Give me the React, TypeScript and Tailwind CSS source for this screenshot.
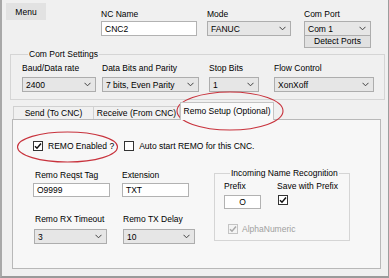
import React from "react";

const Chevron = () => (
  <svg width="7" height="5" viewBox="0 0 7 5" className="mr-[4px] shrink-0">
    <path d="M0.5 0.8 L3.5 3.8 L6.5 0.8" fill="none" stroke="#404040" strokeWidth="1" />
  </svg>
);

function Combo({ value, w }: { value: string; w: string }) {
  return (
    <div className={`${w} h-[15px] flex items-center justify-between bg-[#e6e6e6] border border-[#adadad] pl-[3px]`}>
      <span className="leading-[12px]">{value}</span>
      <Chevron />
    </div>
  );
}

function TextBox({ value, w, center }: { value: string; w: string; center?: boolean }) {
  return (
    <div className={`${w} h-[14px] flex items-center bg-white border border-[#b2b2b2] ${center ? "justify-center" : "pl-[3px]"}`}>
      <span className="leading-[12px]">{value}</span>
    </div>
  );
}

function Check({ disabled }: { disabled?: boolean }) {
  return (
    <div
      className={`w-[10px] h-[10px] flex items-center justify-center shrink-0 border ${
        disabled ? "border-[#c4c4c4] bg-[#f4f4f4]" : "border-[#333333] bg-white"
      }`}
    >
      <svg width="8" height="8" viewBox="0 0 8 8">
        <path
          d="M1 4.2 L3 6.2 L7 1.6"
          fill="none"
          stroke={disabled ? "#a8a8a8" : "#111111"}
          strokeWidth="1.5"
        />
      </svg>
    </div>
  );
}

function EmptyCheck() {
  return <div className="w-[10px] h-[10px] shrink-0 border border-[#333333] bg-white" />;
}

export default function App() {
  return (
    <div className="relative w-[389px] h-[278px] bg-[#f0f0f0] border-l-2 border-l-[#a8a8a8] border-r border-r-[#9c9c9c] border-b-2 border-b-[#9a9a9a] text-[8.5px] text-black font-['Liberation_Sans',Arial,sans-serif] overflow-hidden">
      {/* Top row */}
      <div className="flex items-start pt-[3px]">
        <div className="ml-[4px] w-[40px] h-[17px] bg-[#e2e2e2] flex items-center justify-center">
          <span className="leading-[12px]">Menu</span>
        </div>
        <div className="ml-[55px] flex flex-col pt-[5px]">
          <span className="leading-[12px]">NC Name</span>
          <div className="mt-[1px]">
            <div className="w-[96px] h-[15px] flex items-center bg-white border border-[#b2b2b2] pl-[3px]">
              <span className="leading-[12px]">CNC2</span>
            </div>
          </div>
        </div>
        <div className="ml-[10px] flex flex-col pt-[5px]">
          <span className="leading-[12px]">Mode</span>
          <div className="mt-[1px]">
            <Combo value="FANUC" w="w-[84px]" />
          </div>
        </div>
        <div className="ml-[13px] flex flex-col pt-[5px]">
          <span className="leading-[12px]">Com Port</span>
          <div className="mt-[1px]">
            <Combo value="Com 1" w="w-[67px]" />
          </div>
          <div className="w-[67px] h-[12px] bg-[#e1e1e1] border border-[#adadad] border-t-0 flex items-center justify-center">
            <span className="leading-[11px]">Detect Ports</span>
          </div>
        </div>
      </div>

      {/* Com Port Settings */}
      <fieldset className="ml-[8px] mt-[1px] w-[375px] border border-[#d5d5d5] pl-[11px] pb-[7px] m-0 p-0">
        <legend className="ml-[6px] px-[1px] leading-[11px]">Com Port Settings</legend>
        <div className="flex items-start">
          <div className="flex flex-col">
            <span className="leading-[12px] mt-[2px]">Baud/Data rate</span>
            <div className="mt-[3px]">
              <Combo value="2400" w="w-[74px]" />
            </div>
          </div>
          <div className="flex flex-col ml-[6px]">
            <span className="leading-[12px] mt-[2px]">Data Bits and Parity</span>
            <div className="mt-[3px]">
              <Combo value="7 bits, Even Parity" w="w-[97px]" />
            </div>
          </div>
          <div className="flex flex-col ml-[10px]">
            <span className="leading-[12px] mt-[2px]">Stop Bits</span>
            <div className="mt-[3px]">
              <Combo value="1" w="w-[50px]" />
            </div>
          </div>
          <div className="flex flex-col ml-[15px]">
            <span className="leading-[12px] mt-[2px]">Flow Control</span>
            <div className="mt-[3px]">
              <Combo value="XonXoff" w="w-[100px]" />
            </div>
          </div>
        </div>
      </fieldset>

      {/* Tabs */}
      <div className="ml-[10px] mt-[2px] flex items-end h-[17px]">
        <div className="ml-[1px] w-[81px] h-[13px] bg-[#f0f0f0] border border-b-0 border-[#d0d0d0] flex items-center justify-center">
          <span className="leading-[12px]">Send (To CNC)</span>
        </div>
        <div className="w-[86px] h-[13px] bg-[#f0f0f0] border border-l-0 border-b-0 border-[#d0d0d0] flex items-center justify-center">
          <span className="leading-[12px]">Receive (From CNC)</span>
        </div>
        <div className="relative z-10 w-[94px] h-[18px] -mb-[1px] bg-[#fafafa] border border-b-0 border-[#c4c4c4] flex items-center justify-center pb-[2px]">
          <span className="leading-[12px]">Remo Setup (Optional)</span>
        </div>
      </div>
      <div className="ml-[10px] w-[369px] h-[150px] bg-[#f7f7f7] border border-[#b8b8b8] pl-[20px] flex flex-col">
        <div className="flex items-center mt-[20px] h-[12px]">
          <Check />
          <span className="ml-[5px] leading-[12px]">REMO Enabled ?</span>
          <div className="ml-[10px]">
            <EmptyCheck />
          </div>
          <span className="ml-[5px] leading-[12px]">Auto start REMO for this CNC.</span>
        </div>
        <div className="flex items-start">
          <div className="flex flex-col">
            <div className="flex mt-[17px]">
              <div className="flex flex-col w-[89px]">
                <span className="leading-[12px] ml-[2px]">Remo Reqst Tag</span>
                <div className="mt-[2px]">
                  <TextBox value="O9999" w="w-[77px]" />
                </div>
              </div>
              <div className="flex flex-col">
                <span className="leading-[12px]">Extension</span>
                <div className="mt-[2px]">
                  <TextBox value="TXT" w="w-[67px]" />
                </div>
              </div>
            </div>
            <div className="flex mt-[16px]">
              <div className="flex flex-col w-[89px]">
                <span className="leading-[12px] ml-[2px]">Remo RX Timeout</span>
                <div className="mt-[4px] ml-[1px]">
                  <Combo value="3" w="w-[73px]" />
                </div>
              </div>
              <div className="flex flex-col">
                <span className="leading-[12px] ml-[1px]">Remo TX Delay</span>
                <div className="mt-[4px] ml-[1px]">
                  <Combo value="10" w="w-[72px]" />
                </div>
              </div>
            </div>
          </div>
          <fieldset className="ml-[19px] mt-[15px] w-[136px] h-[74px] border border-[#d5d5d5] m-0 p-0 pl-[9px]">
            <legend className="ml-[6px] px-[1px] leading-[12px]">Incoming Name Recognition</legend>
            <div className="flex">
              <div className="flex flex-col w-[53px]">
                <span className="leading-[12px] mt-[1px]">Prefix</span>
                <div className="mt-[3px]">
                  <TextBox value="O" w="w-[37px]" center />
                </div>
              </div>
              <div className="flex flex-col">
                <span className="leading-[12px] mt-[1px]">Save with Prefix</span>
                <div className="mt-[3px] ml-[1px]">
                  <Check />
                </div>
              </div>
            </div>
            <div className="flex items-center mt-[14px] ml-[4px]">
              <Check disabled />
              <span className="ml-[4px] leading-[12px] text-[#a0a0a0]">AlphaNumeric</span>
            </div>
          </fieldset>
        </div>
      </div>

      {/* Red annotation ellipses */}
      <svg className="absolute left-0 top-0 pointer-events-none" width="389" height="278" viewBox="2 0 389 278">
        <ellipse cx="230" cy="111" rx="53" ry="19" fill="none" stroke="#c8323c" strokeWidth="1.1" />
        <ellipse cx="67.5" cy="147" rx="50" ry="15" fill="none" stroke="#c8323c" strokeWidth="1.1" />
      </svg>
    </div>
  );
}
